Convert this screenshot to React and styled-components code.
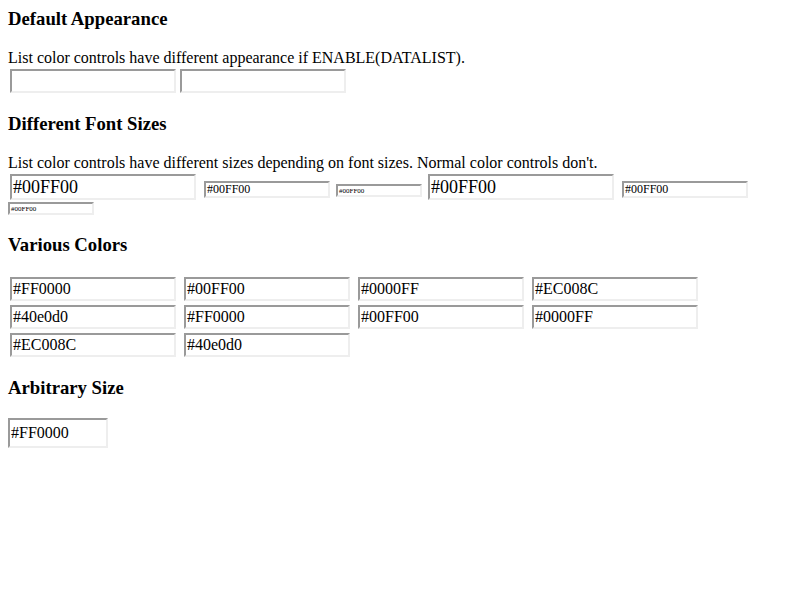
import React from "react";
import styled, { createGlobalStyle, css } from "styled-components";

const Global = createGlobalStyle`
  html, body { background: #ffffff; }
  body {
    margin: 8px;
    font-family: "Liberation Serif", "Times New Roman", serif;
    font-size: 16px;
    color: #000000;
  }
`;

const Heading = styled.h3`
  font-size: 18.72px;
  font-weight: bold;
  margin: 18.72px 0;
  line-height: normal;
  &:first-child { margin-top: 0; }
`;

const Note = styled.div`
  line-height: normal;
`;

const FieldLine = styled.div`
  line-height: 0;
`;

const variants = {
  normal: css`width: 166px; height: 24px; font-size: 16px; margin: 2px;`,
  large: css`width: 186px; height: 26px; font-size: 18px; margin: 2px;`,
  medium: css`width: 126px; height: 17px; font-size: 12px; margin: 2px;`,
  small: css`width: 86px; height: 13px; font-size: 7px; margin: 0;`,
  free: css`width: 100px; height: 30px; font-size: 16px; margin: 0;`,
};

const Field = styled.span`
  display: inline-flex;
  align-items: center;
  box-sizing: border-box;
  vertical-align: baseline;
  padding: 0 1px;
  background: #ffffff;
  border-style: solid;
  border-width: 2px;
  border-color: #9a9a9a #eeeeee #eeeeee #9a9a9a;
  font-family: "Liberation Serif", "Times New Roman", serif;
  line-height: normal;
  white-space: nowrap;
  overflow: hidden;
  ${(p) => variants[p.$variant || "normal"]}
`;

const sizes = ["large", "medium", "small", "large", "medium", "small"];
const colors = [
  "#FF0000", "#00FF00", "#0000FF", "#EC008C", "#40e0d0",
  "#FF0000", "#00FF00", "#0000FF", "#EC008C", "#40e0d0",
];

export default function App() {
  return (
    <>
      <Global />
      <Heading>Default Appearance</Heading>
      <Note>List color controls have different appearance if ENABLE(DATALIST).</Note>
      <FieldLine>
        <Field>{"\u00a0"}</Field>
        <Field>{"\u00a0"}</Field>
      </FieldLine>

      <Heading>Different Font Sizes</Heading>
      <Note>List color controls have different sizes depending on font sizes. Normal color controls don't.</Note>
      <FieldLine>
        {sizes.map((s, i) => (
          <React.Fragment key={i}>
            <Field $variant={s}>#00FF00</Field>{" "}
          </React.Fragment>
        ))}
      </FieldLine>

      <Heading>Various Colors</Heading>
      <FieldLine>
        {colors.map((c, i) => (
          <React.Fragment key={i}>
            <Field>{c}</Field>{" "}
          </React.Fragment>
        ))}
      </FieldLine>

      <Heading>Arbitrary Size</Heading>
      <FieldLine>
        <Field $variant="free">#FF0000</Field>
      </FieldLine>
    </>
  );
}
